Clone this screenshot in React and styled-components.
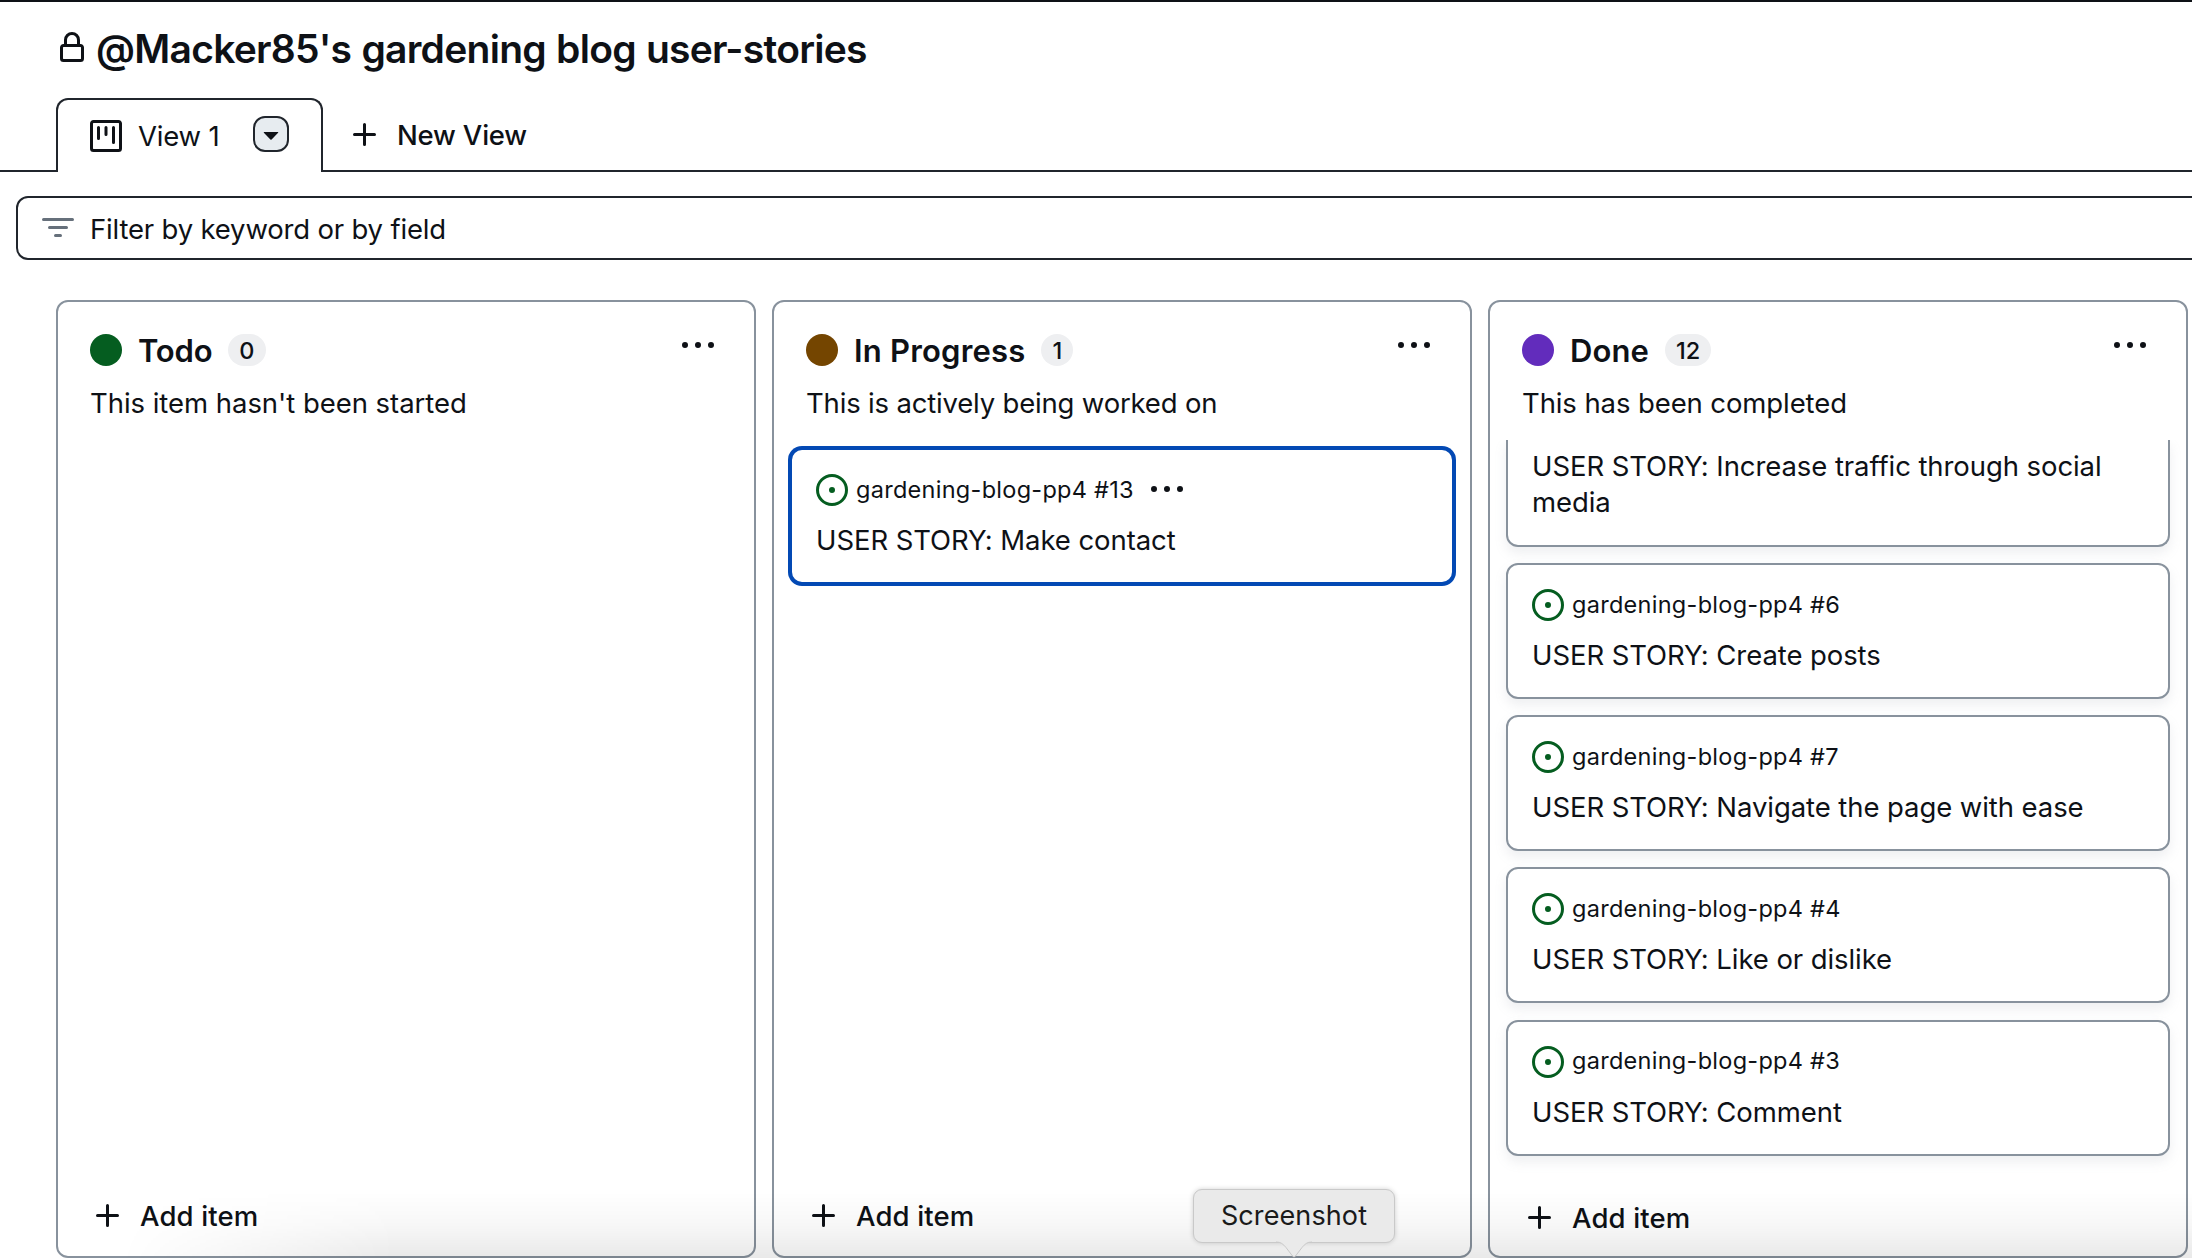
import React from "react";
import styled, { createGlobalStyle, css } from "styled-components";

const colors = {
  fg: "#0e1116",
  line: "#20252c",
  border: "#88929d",
  muted: "#66707b",
  focus: "#0349b4",
  open: "#055d20",
};

const GlobalStyle = createGlobalStyle`
  * { box-sizing: border-box; }
  html, body { margin: 0; background: #fff; overflow: hidden; }
  body {
    font-family: Inter, "Liberation Sans", sans-serif;
    font-size: 27.5px;
    color: ${colors.fg};
    -webkit-font-smoothing: antialiased;
  }
  h1, h2, p, ul { margin: 0; padding: 0; }
  button { font: inherit; color: inherit; background: none; border: 0; padding: 0; }
`;

/* ---------- icons ---------- */

const Svg = styled.svg`
  display: block;
  flex: none;
  width: 32px;
  height: 32px;
  fill: ${(p) => p.$color || "currentColor"};
`;

const paths = {
  lock: "M4 4a4 4 0 0 1 8 0v2h.25c.966 0 1.75.784 1.75 1.75v5.5A1.75 1.75 0 0 1 12.25 15h-8.5A1.75 1.75 0 0 1 2 13.25v-5.5C2 6.784 2.784 6 3.75 6H4Zm8.25 3.5h-8.5a.25.25 0 0 0-.25.25v5.5c0 .138.112.25.25.25h8.5a.25.25 0 0 0 .25-.25v-5.5a.25.25 0 0 0-.25-.25ZM10.5 6V4a2.5 2.5 0 1 0-5 0v2Z",
  project:
    "M1.75 0h12.5C15.216 0 16 .784 16 1.75v12.5A1.75 1.75 0 0 1 14.25 16H1.75A1.75 1.75 0 0 1 0 14.25V1.75C0 .784.784 0 1.75 0ZM1.5 1.75v12.5c0 .138.112.25.25.25h12.5a.25.25 0 0 0 .25-.25V1.75a.25.25 0 0 0-.25-.25H1.75a.25.25 0 0 0-.25.25ZM11.75 3a.75.75 0 0 1 .75.75v7.5a.75.75 0 0 1-1.5 0v-7.5a.75.75 0 0 1 .75-.75Zm-8.25.75a.75.75 0 0 1 1.5 0v5.5a.75.75 0 0 1-1.5 0ZM8 3a.75.75 0 0 1 .75.75v3.5a.75.75 0 0 1-1.5 0v-3.5A.75.75 0 0 1 8 3Z",
  caret:
    "m4.427 7.427 3.396 3.396a.25.25 0 0 0 .354 0l3.396-3.396A.25.25 0 0 0 11.396 7H4.604a.25.25 0 0 0-.177.427Z",
  plus: "M7.75 2a.75.75 0 0 1 .75.75V7h4.25a.75.75 0 0 1 0 1.5H8.5v4.25a.75.75 0 0 1-1.5 0V8.5H2.75a.75.75 0 0 1 0-1.5H7V2.75A.75.75 0 0 1 7.75 2Z",
  filter:
    "M.75 3h14.5a.75.75 0 0 1 0 1.5H.75a.75.75 0 0 1 0-1.5ZM3 7.75A.75.75 0 0 1 3.75 7h8.5a.75.75 0 0 1 0 1.5h-8.5A.75.75 0 0 1 3 7.75Zm3 4a.75.75 0 0 1 .75-.75h2.5a.75.75 0 0 1 0 1.5h-2.5a.75.75 0 0 1-.75-.75Z",
  kebab:
    "M8 9a1.5 1.5 0 1 0 0-3 1.5 1.5 0 0 0 0 3ZM1.5 9a1.5 1.5 0 1 0 0-3 1.5 1.5 0 0 0 0 3Zm13 0a1.5 1.5 0 1 0 0-3 1.5 1.5 0 0 0 0 3Z",
  issue:
    "M8 9.5a1.5 1.5 0 1 0 0-3 1.5 1.5 0 0 0 0 3ZM8 0a8 8 0 1 1 0 16A8 8 0 0 1 8 0ZM1.5 8a6.5 6.5 0 1 0 13 0 6.5 6.5 0 0 0-13 0Z",
};

const Icon = ({ name, color }) => (
  <Svg viewBox="0 0 16 16" $color={color} aria-hidden="true">
    <path d={paths[name]} />
  </Svg>
);

/* ---------- page ---------- */

const Page = styled.div`
  display: flex;
  flex-direction: column;
  width: 2192px;
  height: 1258px;
  overflow: hidden;
  border-top: 2px solid ${colors.fg};
`;

const Header = styled.header`
  display: flex;
  align-items: center;
  gap: 8px;
  height: 96px;
  padding: 0 56px 4px;
`;

const Title = styled.h1`
  padding-top: 2px;
  font-size: 39px;
  font-weight: 600;
  line-height: 48px;
  letter-spacing: -0.73px;
  word-spacing: 1px;
  white-space: nowrap;
`;

const TabBar = styled.nav`
  display: flex;
  flex: none;
  height: 74px;
  padding-left: 56px;
  box-shadow: inset 0 -2px 0 ${colors.line};
`;

const Tab = styled.div`
  display: flex;
  align-items: center;
  width: 267px;
  padding: 0 32px;
  background: #fff;
  border: 2px solid ${colors.line};
  border-bottom: 0;
  border-radius: 12px 12px 0 0;
`;

const TabLabel = styled.span`
  flex: 1;
  margin-left: 16px;
  letter-spacing: -0.2px;
  white-space: nowrap;
`;

const CaretButton = styled.button`
  display: grid;
  place-items: center;
  width: 36px;
  height: 36px;
  margin-bottom: 4px;
  background: #e7ecf0;
  border: 2px solid ${colors.line};
  border-radius: 12px;
`;

const TextButton = styled.button`
  display: flex;
  align-items: center;
  gap: 16px;
  font-weight: 500;
  letter-spacing: ${(p) => p.$tracking || "0.15px"};
`;

const NewView = styled(TextButton)`
  height: 74px;
  margin-left: 26px;
`;

const FilterBar = styled.div`
  display: flex;
  flex: none;
  align-items: center;
  gap: 16px;
  height: 64px;
  margin: 24px -40px 40px 16px;
  padding-left: 24px;
  border: 2px solid ${colors.line};
  border-radius: 12px;
  letter-spacing: -0.18px;
`;

const FilterText = styled.span`
  padding-top: 2px;
`;

/* ---------- board ---------- */

const Board = styled.main`
  display: flex;
  flex: 1;
  gap: 16px;
  min-height: 0;
  padding-left: 56px;
`;

const ColumnBox = styled.section`
  display: flex;
  flex: none;
  flex-direction: column;
  width: 700px;
  border: 2px solid ${colors.border};
  border-radius: 12px;
`;

const ColumnHead = styled.div`
  display: flex;
  flex-direction: column;
  gap: 16px;
  height: 138px;
  padding: 32px 40px 0 32px;
`;

const HeadRow = styled.div`
  display: flex;
  align-items: center;
  gap: 16px;
  height: 32px;
`;

const StatusDot = styled.span`
  width: 32px;
  height: 32px;
  border-radius: 50%;
  background: ${(p) => p.$color};
`;

const ColumnName = styled.h2`
  padding-top: 2px;
  font-size: 31px;
  font-weight: 600;
  line-height: 32px;
  letter-spacing: ${(p) => p.$tracking};
  white-space: nowrap;
`;

const Counter = styled.span`
  height: 32px;
  min-width: 32px;
  padding: 0 11px;
  border-radius: 16px;
  background: #eeeff1;
  font-size: 23.5px;
  font-weight: 500;
  line-height: 33px;
  text-align: center;
`;

const HeadMenu = styled.button`
  align-self: flex-start;
  margin: -4px 0 0 auto;
`;

const Description = styled.p`
  line-height: 42px;
  letter-spacing: ${(p) => p.$tracking};
  white-space: nowrap;
`;

const List = styled.div`
  display: flex;
  flex: 1;
  flex-direction: column;
  gap: 16.15px;
  min-height: 0;
  overflow: hidden;
  padding: ${(p) => (p.$scrolled ? "0" : "8px")} 16px 0;
`;

const CardBox = styled.article`
  display: flex;
  flex: none;
  flex-direction: column;
  gap: 16px;
  padding: 24px;
  background: #fff;
  border: 2px solid ${colors.border};
  border-radius: 12px;
  box-shadow: 0 6px 12px rgba(140, 149, 159, 0.15);
  ${(p) =>
    p.$focused &&
    css`
      border-color: ${colors.focus};
      box-shadow: 0 0 0 2px ${colors.focus};
    `}
  ${(p) =>
    p.$cut &&
    css`
      padding-top: 8px;
      height: 107px;
      border-top: 0;
      border-radius: 0 0 12px 12px;
    `}
`;

const CardHead = styled.div`
  display: flex;
  align-items: center;
  height: 32px;
  font-size: 23.5px;
  letter-spacing: 0.28px;
`;

const Repo = styled.span`
  margin: 0 17px 0 8px;
  padding-bottom: 2px;
  white-space: nowrap;
`;

const CardTitle = styled.p`
  line-height: 36px;
  letter-spacing: -0.08px;
`;

const Footer = styled.div`
  display: flex;
  flex: none;
  align-items: center;
  height: 80px;
  padding: ${(p) => (p.$low ? "4px" : "0")} 34px 0;
`;

/* ---------- overlays ---------- */

const DockShade = styled.div`
  position: absolute;
  left: 0;
  top: 1192px;
  width: 2192px;
  height: 66px;
  pointer-events: none;
  background: linear-gradient(
    to bottom,
    rgba(0, 0, 0, 0),
    rgba(0, 0, 0, 0.03) 50%,
    rgba(0, 0, 0, 0.085)
  );
  mask-image: linear-gradient(100deg, transparent 130px, #000 400px);
`;

const Tooltip = styled.div`
  position: absolute;
  left: 1193px;
  top: 1189px;
  display: flex;
  align-items: center;
  justify-content: center;
  width: 202px;
  height: 54px;
  padding-bottom: 2px;
  background: #eaeaea;
  border: 1px solid #c9c9c9;
  border-radius: 9px;
  box-shadow: 0 0 5px rgba(0, 0, 0, 0.18);
  font-size: 27px;
  letter-spacing: 0.1px;
  color: #1a1a1a;
`;

const Arrow = styled.svg`
  position: absolute;
  left: 82px;
  top: 51px;
  width: 36px;
  height: 18px;
`;

const columns = [
  {
    name: "Todo",
    tracking: "-0.2px",
    count: 0,
    color: "#055d20",
    text: "This item hasn't been started",
    textTracking: "-0.04px",
    cards: [],
  },
  {
    name: "In Progress",
    tracking: "0.2px",
    count: 1,
    color: "#744500",
    text: "This is actively being worked on",
    textTracking: "-0.18px",
    cards: [{ issue: 13, title: "USER STORY: Make contact", focused: true }],
  },
  {
    name: "Done",
    tracking: "0.1px",
    count: 12,
    color: "#622cbc",
    text: "This has been completed",
    textTracking: "-0.1px",
    scrolled: true,
    cards: [
      { title: "USER STORY: Increase traffic through social media" },
      { issue: 6, title: "USER STORY: Create posts" },
      { issue: 7, title: "USER STORY: Navigate the page with ease" },
      { issue: 4, title: "USER STORY: Like or dislike" },
      { issue: 3, title: "USER STORY: Comment" },
    ],
  },
];

const Card = ({ issue, title, focused }) => (
  <CardBox $focused={focused} $cut={!issue}>
    {issue && (
      <CardHead>
        <Icon name="issue" color={colors.open} />
        <Repo>gardening-blog-pp4 #{issue}</Repo>
        {focused && (
          <button aria-label="Card menu">
            <Icon name="kebab" />
          </button>
        )}
      </CardHead>
    )}
    <CardTitle>{title}</CardTitle>
  </CardBox>
);

const Column = ({ column }) => (
  <ColumnBox>
    <ColumnHead>
      <HeadRow>
        <StatusDot $color={column.color} />
        <ColumnName $tracking={column.tracking}>{column.name}</ColumnName>
        <Counter>{column.count}</Counter>
        <HeadMenu aria-label="Column menu">
          <Icon name="kebab" />
        </HeadMenu>
      </HeadRow>
      <Description $tracking={column.textTracking}>{column.text}</Description>
    </ColumnHead>
    <List $scrolled={column.scrolled}>
      {column.cards.map((card) => (
        <Card key={card.title} {...card} />
      ))}
    </List>
    <Footer $low={column.scrolled}>
      <TextButton>
        <Icon name="plus" />
        Add item
      </TextButton>
    </Footer>
  </ColumnBox>
);

export default function App() {
  return (
    <>
      <GlobalStyle />
      <Page>
        <Header>
          <Icon name="lock" />
          <Title>@Macker85's gardening blog user-stories</Title>
        </Header>
        <TabBar>
          <Tab>
            <Icon name="project" />
            <TabLabel>View 1</TabLabel>
            <CaretButton aria-label="View options">
              <Icon name="caret" />
            </CaretButton>
          </Tab>
          <NewView $tracking="-0.2px">
            <Icon name="plus" />
            New View
          </NewView>
        </TabBar>
        <FilterBar>
          <Icon name="filter" color={colors.muted} />
          <FilterText>Filter by keyword or by field</FilterText>
        </FilterBar>
        <Board>
          {columns.map((column) => (
            <Column key={column.name} column={column} />
          ))}
        </Board>
      </Page>
      <DockShade />
      <Tooltip>
        Screenshot
        <Arrow viewBox="0 0 36 18">
          <path d="M0 0H36V1C31 1 29 3 26 6.500L19.500 15Q18 17 16.500 15L10 6.500C7 3 5 1 0 1Z" fill="#eaeaea" />
          <path
            d="M0 1C5 1 7 3 10 6.500L16.500 15Q18 17 19.500 15L26 6.500C29 3 31 1 36 1"
            fill="none"
            stroke="#c9c9c9"
          />
        </Arrow>
      </Tooltip>
    </>
  );
}
